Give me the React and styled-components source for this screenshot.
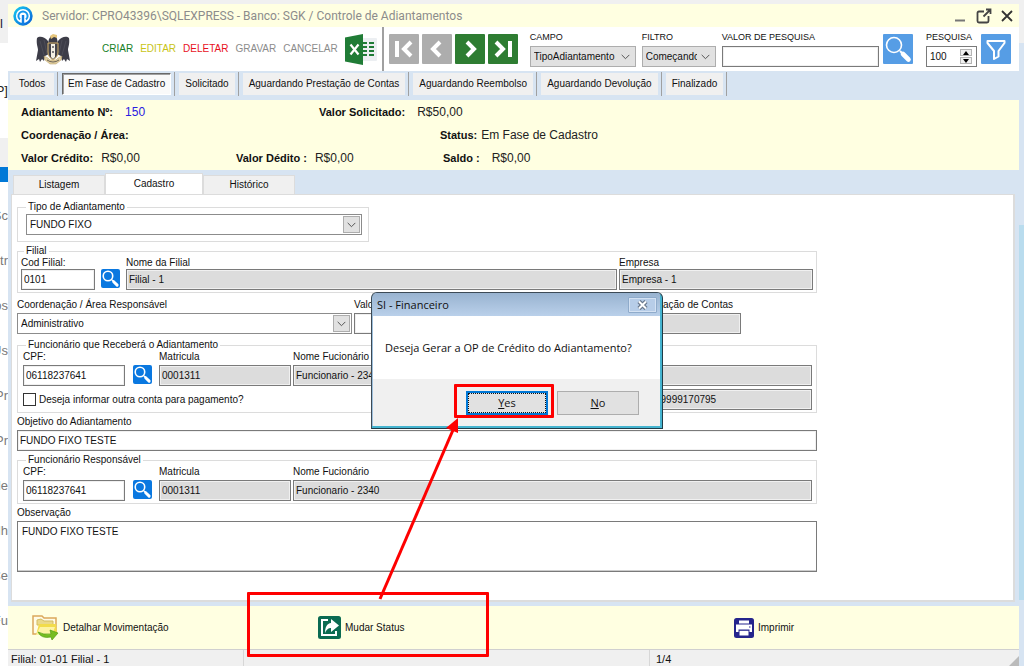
import React from "react";
import styled, { createGlobalStyle } from "styled-components";

const GlobalStyle = createGlobalStyle`
  * {
    box-sizing: border-box;
  }
  body {
    margin: 0;
    background: #f0f0f0;
    color: #111;
    font-family: "Liberation Sans", Arial, sans-serif;
    font-size: 10px;
    line-height: 12px;
  }
  button, input, select, textarea {
    margin: 0;
    color: inherit;
    font: inherit;
  }
`;

const Desktop = styled.div`
  position: relative;
  display: grid;
  grid-template-columns: 8px minmax(0, 1fr) 5px;
  min-height: 100vh;
  padding-top: 4px;
  overflow: hidden;
`;

/* slices of the page that lies behind the window */
const LeftStrip = styled.div`
  display: flex;
  flex-direction: column;
  overflow: hidden;
  background: #fff;
  color: #7a7a7a;
  font-size: 13px;
`;

const Slice = styled.div`
  display: flex;
  flex: none;
  align-items: center;
  justify-content: ${(p) => (p.$left ? "flex-start" : "flex-end")};
  height: ${(p) => p.$height}px;
  background: ${(p) => p.$bg || "#fff"};
  color: ${(p) => p.$color || "inherit"};
`;

const RightStrip = styled.div`
  display: grid;
  grid-template-rows: 39px 182px 375px 1fr;
`;

const RightSlice = styled.div`
  background: ${(p) => p.$bg};
`;

const Window = styled.div`
  display: flex;
  flex-direction: column;
  background: #d7e4f2;
`;

const TitleBar = styled.header`
  display: flex;
  align-items: center;
  height: 23px;
  padding: 0 5px;
  background: #ffffe1;
  color: #8c8c8c;
`;

const Title = styled.h1`
  flex: 1;
  margin: 0 0 0 9px;
  font-family: Roboto, "Liberation Sans", sans-serif;
  font-size: 12px;
  font-weight: 400;
`;

const WindowButtons = styled.div`
  display: flex;
  gap: 8px;
`;

const BareButton = styled.button`
  display: flex;
  align-items: center;
  gap: 4px;
  padding: 0;
  border: 0;
  background: none;
  color: ${(p) => p.$color || "inherit"};
`;

const Toolbar = styled.div`
  display: flex;
  align-items: center;
  height: 44px;
  padding-right: 8px;
  background: #fff;
`;

const Brand = styled.div`
  display: flex;
  padding: 0 31px 0 27px;
`;

const Actions = styled.div`
  display: flex;
  align-items: center;
  gap: 7px;
  padding-right: 4px;
`;

const Navigation = styled.div`
  display: flex;
  align-items: center;
  align-self: stretch;
  gap: 3px;
  padding: 0 12px 0 5px;
  border-left: 2px solid #a0a0a0;
`;

const SquareButton = styled.button`
  display: flex;
  flex: none;
  align-items: center;
  justify-content: center;
  width: 30px;
  height: 30px;
  padding: 0;
  border: 0;
  border-radius: 1px;
  background: ${(p) => p.$bg};
`;

const Search = styled.div`
  display: flex;
  flex: 1;
  align-items: center;
  gap: 4px;
`;

const SearchField = styled.div`
  display: flex;
  flex: ${(p) => (p.$width ? "none" : 1)};
  flex-direction: column;
  gap: 3px;
  width: ${(p) => (p.$width ? p.$width + "px" : "auto")};
  min-width: 0;
  margin-right: ${(p) => (p.$width ? 2 : 0)}px;
  font-size: 9px;
`;

const PageSize = styled(SearchField)`
  margin: 0 0 0 9px;
`;

const Spinner = styled.div`
  display: flex;
  align-items: center;
  height: 21px;
  padding: 2px 4px 2px 0;
  border: 1px solid #7a7a7a;
  background: #fff;
  font-size: 10px;
`;

const SpinnerInput = styled.input`
  flex: 1;
  min-width: 0;
  padding: 0 0 0 3px;
  border: 0;
  background: none;
`;

const SpinnerButtons = styled.div`
  display: grid;
  gap: 1px;
`;

const SpinnerButton = styled.button`
  display: flex;
  align-items: center;
  justify-content: center;
  width: 12px;
  height: 7px;
  padding: 0;
  border: 1px solid #b4b4b4;
  background: #f0f0f0;
`;

const SelectBox = styled.div`
  display: grid;
  height: 21px;
  border: 1px solid ${(p) => (p.$flat ? "#adadad" : "#8c8c8c")};
  background: ${(p) => (p.$flat ? "#e1e1e1" : "#fff")};
  font-size: 10px;
`;

const NativeSelect = styled.select`
  grid-area: 1 / 1;
  width: 100%;
  min-width: 0;
  padding: 0 16px 0 3px;
  border: 0;
  background: none;
  appearance: none;
`;

const SelectArrow = styled.span`
  display: flex;
  grid-area: 1 / 1;
  align-items: center;
  justify-content: center;
  justify-self: end;
  width: 17px;
  margin: 1px;
  border: ${(p) => (p.$flat ? "0" : "1px solid #adadad")};
  background: #e1e1e1;
  pointer-events: none;
`;

const StatusTabs = styled.nav`
  display: flex;
  align-items: center;
  height: 29px;
  padding: 0 2px 3px;
`;

const StatusTab = styled.div`
  display: flex;
  align-items: center;
  height: 24px;
  margin-right: 4px;
  padding-right: 3px;
  border-right: 1px solid #a0a0a0;
`;

const StatusButton = styled.button`
  min-width: 44px;
  height: 22px;
  padding: 0 5px;
  border: 1px solid;
  border-color: ${(p) =>
    p.$active ? "#696969 #fff #fff #696969" : "#f0f0f0"};
  box-shadow: ${(p) => (p.$active ? "inset 1px 1px #a0a0a0" : "none")};
  background: ${(p) => (p.$active ? "#f9f9f9" : "#f0f0f0")};
  white-space: nowrap;
`;

const Summary = styled.section`
  display: grid;
  grid-template-rows: 24px 22px 24px;
  padding: 0 13px;
  background: #ffffe1;
`;

const SummaryRow = styled.dl`
  display: grid;
  grid-template-columns: ${(p) => p.$columns};
  align-items: center;
  margin: 0;
`;

const SummaryItem = styled.div`
  display: flex;
  align-items: center;
  gap: ${(p) => p.$gap || 8}px;
`;

const Term = styled.dt`
  font-size: 11px;
  font-weight: 700;
`;

const Value = styled.dd`
  margin: 0;
  color: ${(p) => p.$color || "#222"};
  font-size: 12px;
`;

const Tabs = styled.div`
  display: flex;
  align-items: flex-end;
  height: 24px;
  padding-left: 5px;
`;

const Tab = styled.button`
  width: ${(p) => (p.$active ? 98 : 92)}px;
  height: ${(p) => (p.$active ? 21 : 19)}px;
  padding: 0;
  border: 1px solid #dcdcdc;
  border-bottom: 0;
  background: ${(p) => (p.$active ? "#fff" : "#f0f0f0")};
`;

const Panel = styled.main`
  flex: 1;
  margin: 0 4px 4px 3px;
  padding: 6px 6px 24px 5px;
  border: 1px solid #dcdcdc;
  border-right-width: 2px;
  border-bottom-width: 2px;
  background: #fff;
`;

const Form = styled.form`
  display: grid;
  gap: 3px;
  width: 100%;
  max-width: 800px;
`;

const Group = styled.fieldset`
  width: ${(p) => p.$width || "100%"};
  min-width: 0;
  margin: 0;
  padding: ${(p) => p.$padding || "0 4px 2px"};
  border: 1px solid #dcdcdc;
`;

const Legend = styled.legend`
  margin-left: ${(p) => (p.$wide ? 0 : 3)}px;
  padding: 0 2px;
`;

const Line = styled.div`
  display: grid;
  grid-template-columns: ${(p) => p.$columns};
  align-items: end;
  gap: 2px;
  padding: ${(p) => p.$padding || 0};
`;

const Field = styled.div`
  display: grid;
  gap: ${(p) => (p.$tight ? 0 : 2)}px;
  min-width: 0;
`;

const Label = styled.label`
  padding-right: 8px;
  text-align: ${(p) => (p.$right ? "right" : "left")};
  white-space: nowrap;
`;

const TextInput = styled.input`
  width: 100%;
  height: 21px;
  padding: 0 3px 1px 2px;
  border: 1px solid #7a7a7a;
  border-radius: 0;
  box-shadow: inset 0 0 0 1px #f0f0f0;
  background: ${(p) => (p.readOnly ? "#dcdcdc" : "#fff")};
`;

const TextArea = styled.textarea`
  display: block;
  width: 100%;
  height: 51px;
  padding: 4px;
  border: 1px solid #7a7a7a;
  box-shadow: inset 0 -1px #ccc;
  resize: none;
`;

const LookupButton = styled.button`
  display: flex;
  align-items: center;
  justify-content: center;
  justify-self: center;
  width: 19px;
  height: 19px;
  margin-bottom: 2px;
  padding: 0;
  border: 0;
  border-radius: 2px;
  background: #0a78e0;
`;

const CheckLine = styled.div`
  display: grid;
  grid-template-columns: minmax(0, 1fr) 160px;
  align-items: center;
  padding-top: 3px;
`;

const Check = styled.label`
  display: flex;
  align-items: center;
  gap: 3px;
`;

const Checkbox = styled.input`
  width: 13px;
  height: 13px;
  border: 1px solid #333;
  background: #fff;
  appearance: none;
`;

const Footer = styled.footer`
  display: grid;
  grid-template-columns: 286px 416px 1fr;
  align-items: center;
  height: 43px;
  padding-left: 24px;
  background: #ffffe1;
`;

const StatusBar = styled.div`
  display: grid;
  grid-template-columns: 236px 406px 1fr auto;
  height: 17px;
  border-top: 1px solid #d0d0d0;
  background: #f0f0f0;
`;

const StatusCell = styled.div`
  padding: 3px 0 0 ${(p) => (p.$first ? 3 : 6)}px;
  border-right: ${(p) => (p.$last ? "0" : "1px solid #d7d7d7")};
  font-size: 11px;
`;

const Dialog = styled.section`
  position: absolute;
  top: 292px;
  left: 371px;
  width: 292px;
  border: 1px solid #3c4a56;
  border-right-color: #1f3c48;
  border-bottom-color: #1f3c48;
  border-radius: 6px 6px 0 0;
  box-shadow: inset -2px -2px #45b4d0;
  background: #9fc0dc;
  padding: 0 2px 2px 1px;
  overflow: hidden;
  font-family: "Open Sans", "Noto Sans", sans-serif;
  font-size: 11px;
`;

const DialogTitle = styled.header`
  display: flex;
  align-items: center;
  justify-content: space-between;
  height: 23px;
  padding: 0 3px 0 4px;
  background: linear-gradient(#98b3d0, #bad0ea);
`;

const DialogHeading = styled.h2`
  margin: 0;
  font-size: 11px;
  font-weight: 400;
`;

const DialogClose = styled.button`
  display: flex;
  align-items: center;
  justify-content: center;
  width: 29px;
  height: 16px;
  padding: 0;
  border: 1px solid #8fabcb;
  border-radius: 1px;
  box-shadow: inset 0 0 0 1px #d4e2f3;
  background: #b7cde8;
`;

const DialogBody = styled.p`
  margin: 0;
  padding: 26px 12px 25px;
  background: #fff;
  white-space: nowrap;
`;

const DialogFooter = styled.footer`
  display: flex;
  justify-content: flex-end;
  gap: 9px;
  padding: 12px 21px 11px;
  background: #f0f0f0;
`;

const DialogButton = styled.button`
  width: 82px;
  height: 24px;
  padding: 0;
  border: ${(p) => (p.$primary ? "2px solid #0078d7" : "1px solid #adadad")};
  outline: ${(p) => (p.$primary ? "1px dotted #111" : "none")};
  outline-offset: -3px;
  background: #e1e1e1;
`;

/* red marks drawn over the window */
const Highlight = styled.div`
  position: absolute;
  top: ${(p) => p.$top}px;
  left: ${(p) => p.$left}px;
  width: ${(p) => p.$width}px;
  height: ${(p) => p.$height}px;
  border: 3px solid #fe0000;
  border-radius: 1px;
  pointer-events: none;
`;

const Arrow = styled.svg`
  position: absolute;
  top: 416px;
  left: 370px;
  pointer-events: none;
`;

const AppLogo = () => (
  <svg width="20" height="20" viewBox="0 0 20 20" aria-hidden="true">
    <defs>
      <linearGradient id="ring" x1="0" y1="0" x2="1" y2="1">
        <stop offset="0" stopColor="#16c8f0" />
        <stop offset="1" stopColor="#0a62d8" />
      </linearGradient>
    </defs>
    <circle
      cx="10"
      cy="10"
      r="8.400"
      fill="#fff"
      stroke="url(#ring)"
      strokeWidth="2.600"
    />
    <path
      d="M7 13.500A4.600 4.600 0 1 1 13 13.500"
      fill="none"
      stroke="#1496ec"
      strokeWidth="2"
    />
    <path d="M8.800 9h2.400v10H8.800z" fill="#1280e4" />
  </svg>
);

const Eagle = () => (
  <svg width="36" height="31" viewBox="0 0 36 31" aria-hidden="true">
    <path
      d="M13 7C9 2 4 2 2 4c-1 6 1 9 1 12L1 27l3-2 1 3 2-3 2 2 1-5 4-2z"
      fill="#3d3d48"
    />
    <path
      d="M23 7c4-5 9-5 11-3 1 6-1 9-1 12l2 11-3-2-1 3-2-3-2 2-1-5-4-2z"
      fill="#3d3d48"
    />
    <path
      d="M5 7l4 14M9 6l3 14M31 7l-4 14M27 6l-3 14"
      stroke="#5c5c66"
      strokeWidth=".5"
    />
    <path d="M14 5l2-3 5-1 1 4 1 4-2 4h-6l-2-4z" fill="#3d3d48" />
    <path d="M15 2l3-2 4 1v3l-3-1-3 2z" fill="#e6c67c" />
    <path
      d="M13 9h10v9c0 4-2 6-5 8-3-2-5-4-5-8z"
      fill="#44444d"
      stroke="#d8b46a"
    />
    <path d="M16 10h4v13l-2 2-2-2z" fill="#f4f0e4" />
    <path d="M18 12v2M18 17v2" stroke="#55555c" strokeWidth="1.500" />
    <path
      d="M9 22l4 2 2 2h6l2-2 4-2-1 4-5 4h-6l-5-4z"
      fill="#e2cfa0"
      stroke="#b49a62"
      strokeWidth=".5"
    />
    <path d="M12 26q6 4 12 0" fill="none" stroke="#6b6356" />
  </svg>
);

const ExcelIcon = () => (
  <svg width="33" height="31" viewBox="0 0 33 31" aria-hidden="true">
    <path d="M18 4h13q1 0 1 1v21q0 1-1 1H18z" fill="#eceff2" />
    <path d="M0 3.500L18 0v31L0 27.500z" fill="#207c36" />
    <path
      d="M5.500 10.500l8 10M13.500 10.500l-8 10"
      stroke="#fff"
      strokeWidth="2.200"
    />
    <path
      d="M18 9h4M18 13h4M18 17h4M18 21h4M24 9h5M24 13h5M24 17h5M24 21h5"
      stroke="#207c36"
      strokeWidth="2.200"
    />
  </svg>
);

const navPaths = {
  first: "M8 7v16M22 8l-7 7 7 7",
  previous: "M18 8l-7 7 7 7",
  next: "M12 8l7 7-7 7",
  last: "M8 8l7 7-7 7M22 7v16",
};

const NavIcon = ({ name }) => (
  <svg width="30" height="30" viewBox="0 0 30 30" aria-hidden="true">
    <path d={navPaths[name]} fill="none" stroke="#fff" strokeWidth="4" />
  </svg>
);

const SearchIcon = ({ size, width }) => (
  <svg width={size} height={size} viewBox="0 0 30 30" aria-hidden="true">
    <circle
      cx="11"
      cy="11"
      r="7.500"
      fill="none"
      stroke="#fff"
      strokeWidth={width}
    />
    <path d="M17 17l3 3" stroke="#fff" strokeWidth="2" />
    <path
      d="M20 20l5.500 5.500"
      stroke="#fff"
      strokeWidth="4.600"
      strokeLinecap="round"
    />
  </svg>
);

const FunnelIcon = () => (
  <svg width="30" height="30" viewBox="0 0 30 30" aria-hidden="true">
    <path
      d="M6.500 7h17v2L17.500 17v5.500L13 25v-8L6.500 9z"
      fill="none"
      stroke="#fff"
      strokeWidth="2"
      strokeLinejoin="round"
    />
  </svg>
);

const Chevron = () => (
  <svg width="9" height="6" viewBox="0 0 9 6" aria-hidden="true">
    <path d="M.7.900l3.800 3.800L8.300.900" fill="none" stroke="#555" />
  </svg>
);

const FolderIcon = () => (
  <svg width="27" height="26" viewBox="0 0 27 26" aria-hidden="true">
    <path
      d="M1 1h9l2 2h12v16H1z"
      fill="#fffbe6"
      stroke="#dba85c"
      strokeWidth="1.500"
    />
    <path d="M5 5l4-1 3 2h9v4H5z" fill="#ead98a" stroke="#d3bc62" />
    <path d="M7 9h17l1 11H4z" fill="#f2dc4b" />
    <path d="M4 20l4-8h15l-3 8z" fill="#fdf3a4" />
    <path
      d="M6 17q5 3 13 2l-1-4 8 3-6 7-1-3Q9 24 6 17z"
      fill="#76bd22"
      stroke="#519e14"
      strokeWidth=".7"
    />
  </svg>
);

const ShareIcon = () => (
  <svg width="23" height="23" viewBox="0 0 23 23" aria-hidden="true">
    <rect width="23" height="23" rx="2.500" fill="#0b6b52" />
    <path d="M10 4H4v15h14v-4" fill="none" stroke="#fff" strokeWidth="2" />
    <path
      d="M13 3l8 6.500-8 6.500v-4c-3 0-5 2-6 5 0-6 2-9.500 6-10z"
      fill="#fff"
    />
  </svg>
);

const PrinterIcon = () => (
  <svg width="20" height="20" viewBox="0 0 20 20" aria-hidden="true">
    <rect width="20" height="20" rx="2.500" fill="#25258c" />
    <path d="M5 2.500h10v3H5zM2 6.500h16V14h-2.500v-2.500h-11V14H2z" fill="#fff" />
    <path d="M5.500 12.800h9V17.500h-9z" fill="#fff" />
    <path d="M15 9h1.500" stroke="#25258c" />
  </svg>
);

const SelectField = ({ id, value, flat }) => (
  <SelectBox $flat={flat}>
    <NativeSelect id={id} defaultValue={value}>
      <option>{value}</option>
    </NativeSelect>
    <SelectArrow $flat={flat}>
      <Chevron />
    </SelectArrow>
  </SelectBox>
);

const Input = ({ id, label, value, locked, tight, right }) => (
  <Field $tight={tight}>
    <Label htmlFor={id} $right={right}>
      {label}
    </Label>
    <TextInput id={id} defaultValue={value} readOnly={locked} />
  </Field>
);

const Lookup = () => (
  <LookupButton type="button" aria-label="Procurar">
    <SearchIcon size={19} width={2.5} />
  </LookupButton>
);

const Employee = ({ prefix, name }) => (
  <Line $columns="102px 30px 132px minmax(0, 1fr)">
    <Input id={`${prefix}-cpf`} label="CPF:" value="06118237641" />
    <Lookup />
    <Input
      id={`${prefix}-matricula`}
      label="Matricula"
      value="0001311"
      locked
    />
    <Input id={`${prefix}-nome`} label="Nome Fucionário" value={name} locked />
  </Line>
);

const slices = ["Sc", "ntr", "os", "Us", "Pr", "Pr", "de", "olh", "Ce", "Fu"];

const actions = [
  ["CRIAR", "#168026"],
  ["EDITAR", "#c8c416"],
  ["DELETAR", "#e8101c"],
  ["GRAVAR", "#8c8c8c"],
  ["CANCELAR", "#8c8c8c"],
];

const statusTabs = [
  "Todos",
  "Em Fase de Cadastro",
  "Solicitado",
  "Aguardando Prestação de Contas",
  "Aguardando Reembolso",
  "Aguardando Devolução",
  "Finalizado",
];

const App = () => {
  return (
    <Desktop>
      <GlobalStyle />
      <LeftStrip aria-hidden="true">
        <Slice $left $height={39} $bg="#f0f0f0" $color="#223">
          l
        </Slice>
        <Slice $height={95} $color="#222">
          P]
        </Slice>
        <Slice $height={29} $bg="#f0f0f0" />
        <Slice $height={15} $bg="#0078d7" />
        <Slice $height={11} />
        {slices.map((text, i) => (
          <Slice key={i} $height={45}>
            {text}
          </Slice>
        ))}
      </LeftStrip>

      <Window>
        <TitleBar>
          <AppLogo />
          <Title>
            Servidor: CPRO43396\SQLEXPRESS - Banco: SGK / Controle de
            Adiantamentos
          </Title>
          <WindowButtons>
            <BareButton aria-label="Minimizar">
              <svg width="14" height="16" viewBox="0 0 14 16">
                <path d="M1 12.500h10" stroke="#777" strokeWidth="2" />
              </svg>
            </BareButton>
            <BareButton aria-label="Restaurar">
              <svg width="16" height="16" viewBox="0 0 16 16">
                <path
                  d="M8 3.500H3q-1.500 0-1.500 1.500v8q0 1.500 1.500 1.500h8q1.500 0 1.500-1.500V8M10 1.500h4.500V6M14.500 1.500L7.500 8.500"
                  fill="none"
                  stroke="#444"
                  strokeWidth="1.800"
                />
              </svg>
            </BareButton>
            <BareButton aria-label="Fechar">
              <svg width="14" height="16" viewBox="0 0 14 16">
                <path
                  d="M2 3l10 10M12 3L2 13"
                  stroke="#333"
                  strokeWidth="1.800"
                />
              </svg>
            </BareButton>
          </WindowButtons>
        </TitleBar>

        <Toolbar>
          <Brand>
            <Eagle />
          </Brand>
          <Actions>
            {actions.map(([name, color]) => (
              <BareButton key={name} $color={color}>
                {name}
              </BareButton>
            ))}
            <BareButton aria-label="Excel">
              <ExcelIcon />
            </BareButton>
          </Actions>
          <Navigation>
            <SquareButton $bg="#adadad" aria-label="Primeiro">
              <NavIcon name="first" />
            </SquareButton>
            <SquareButton $bg="#adadad" aria-label="Anterior">
              <NavIcon name="previous" />
            </SquareButton>
            <SquareButton $bg="#2e7d32" aria-label="Próximo">
              <NavIcon name="next" />
            </SquareButton>
            <SquareButton $bg="#2e7d32" aria-label="Último">
              <NavIcon name="last" />
            </SquareButton>
          </Navigation>
          <Search>
            <SearchField $width={106}>
              <Label htmlFor="campo">CAMPO</Label>
              <SelectField id="campo" value="TipoAdiantamento" flat />
            </SearchField>
            <SearchField $width={74}>
              <Label htmlFor="filtro">FILTRO</Label>
              <SelectField id="filtro" value="Começando" flat />
            </SearchField>
            <SearchField>
              <Label htmlFor="valor-pesquisa">VALOR DE PESQUISA</Label>
              <TextInput id="valor-pesquisa" />
            </SearchField>
            <SquareButton $bg="#569de5" aria-label="Pesquisar">
              <SearchIcon size={30} width={1.6} />
            </SquareButton>
            <PageSize $width={51}>
              <Label htmlFor="pesquisa">PESQUISA</Label>
              <Spinner>
                <SpinnerInput id="pesquisa" defaultValue="100" />
                <SpinnerButtons>
                  <SpinnerButton aria-label="Mais">
                    <svg width="6" height="4" viewBox="0 0 6 4">
                      <path d="M0 4l3-4 3 4z" />
                    </svg>
                  </SpinnerButton>
                  <SpinnerButton aria-label="Menos">
                    <svg width="6" height="4" viewBox="0 0 6 4">
                      <path d="M0 0l3 4 3-4z" />
                    </svg>
                  </SpinnerButton>
                </SpinnerButtons>
              </Spinner>
            </PageSize>
            <SquareButton $bg="#569de5" aria-label="Filtrar">
              <FunnelIcon />
            </SquareButton>
          </Search>
        </Toolbar>

        <StatusTabs>
          {statusTabs.map((name, i) => (
            <StatusTab key={name}>
              <StatusButton $active={i === 1}>{name}</StatusButton>
            </StatusTab>
          ))}
        </StatusTabs>

        <Summary>
          <SummaryRow $columns="298px 1fr">
            <SummaryItem $gap={12}>
              <Term>Adiantamento Nº:</Term>
              <Value $color="#2a20e0">150</Value>
            </SummaryItem>
            <SummaryItem $gap={12}>
              <Term>Valor Solicitado:</Term>
              <Value>R$50,00</Value>
            </SummaryItem>
          </SummaryRow>
          <SummaryRow $columns="419px 1fr">
            <SummaryItem>
              <Term>Coordenação / Área:</Term>
            </SummaryItem>
            <SummaryItem $gap={4}>
              <Term>Status:</Term>
              <Value>Em Fase de Cadastro</Value>
            </SummaryItem>
          </SummaryRow>
          <SummaryRow $columns="215px 207px 1fr">
            <SummaryItem>
              <Term>Valor Crédito:</Term>
              <Value>R$0,00</Value>
            </SummaryItem>
            <SummaryItem>
              <Term>Valor Dédito :</Term>
              <Value>R$0,00</Value>
            </SummaryItem>
            <SummaryItem $gap={12}>
              <Term>Saldo :</Term>
              <Value>R$0,00</Value>
            </SummaryItem>
          </SummaryRow>
        </Summary>

        <Tabs>
          <Tab>Listagem</Tab>
          <Tab $active>Cadastro</Tab>
          <Tab>Histórico</Tab>
        </Tabs>
        <Panel>
          <Form>
            <Group $width="352px" $padding="1px 6px 6px 8px">
              <Legend $wide>Tipo de Adiantamento</Legend>
              <SelectField id="tipo" value="FUNDO FIXO" />
            </Group>

            <Group $padding="0 3px 2px">
              <Legend>Filial</Legend>
              <Line $columns="74px 27px minmax(0, 1fr) 194px">
                <Input tight id="cod" label="Cod Filial:" value="0101" />
                <Lookup />
                <Input
                  tight
                  id="filial"
                  label="Nome da Filial"
                  value="Filial - 1"
                  locked
                />
                <Input
                  tight
                  id="empresa"
                  label="Empresa"
                  value="Empresa - 1"
                  locked
                />
              </Line>
            </Group>

            <Line $columns="335px 200px 185px" $padding="3px 0 2px">
              <Field>
                <Label htmlFor="area">Coordenação / Área Responsável</Label>
                <SelectField id="area" value="Administrativo" />
              </Field>
              <Input id="valor" label="Valor" />
              <Input id="prestacao" label="Prestação de Contas" locked right />
            </Line>

            <Group $padding="0 4px 2px 5px">
              <Legend>Funcionário que Receberá o Adiantamento</Legend>
              <Employee prefix="recebedor" name="Funcionario - 2340" />
              <CheckLine>
                <Check>
                  <Checkbox type="checkbox" />
                  Deseja informar outra conta para pagamento?
                </Check>
                <TextInput
                  aria-label="Conta"
                  defaultValue="99999170795"
                  readOnly
                />
              </CheckLine>
            </Group>

            <Input
              id="objetivo"
              label="Objetivo do Adiantamento"
              value="FUNDO FIXO TESTE"
            />

            <Group $padding="0 4px 2px 5px">
              <Legend>Funcionário Responsável</Legend>
              <Employee prefix="responsavel" name="Funcionario - 2340" />
            </Group>

            <Field>
              <Label htmlFor="obs">Observação</Label>
              <TextArea id="obs" defaultValue="FUNDO FIXO TESTE" />
            </Field>
          </Form>
        </Panel>

        <Footer>
          <BareButton>
            <FolderIcon />
            Detalhar Movimentação
          </BareButton>
          <BareButton>
            <ShareIcon />
            Mudar Status
          </BareButton>
          <BareButton>
            <PrinterIcon />
            Imprimir
          </BareButton>
        </Footer>
        <StatusBar>
          <StatusCell $first>Filial: 01-01 Filial - 1</StatusCell>
          <StatusCell />
          <StatusCell $last>1/4</StatusCell>
          <svg width="10" height="16" viewBox="0 0 10 16" aria-hidden="true">
            <path d="M10 6v10H0z" fill="#bbb" />
          </svg>
        </StatusBar>
      </Window>

      <RightStrip aria-hidden="true">
        <RightSlice $bg="#f0f0f0" />
        <RightSlice $bg="#d7e4f2" />
        <RightSlice $bg="#b9dcee" />
        <RightSlice $bg="#d7e4f2" />
      </RightStrip>

      <Dialog role="dialog" aria-labelledby="dialog-title">
        <DialogTitle>
          <DialogHeading id="dialog-title">SI - Financeiro</DialogHeading>
          <DialogClose aria-label="Fechar">
            <svg width="13" height="10" viewBox="0 0 13 10">
              <path
                d="M3 1.500l7 7M10 1.500l-7 7"
                stroke="#66758a"
                strokeWidth="4.400"
              />
              <path
                d="M3 1.500l7 7M10 1.500l-7 7"
                stroke="#fff"
                strokeWidth="2"
              />
            </svg>
          </DialogClose>
        </DialogTitle>
        <DialogBody>Deseja Gerar a OP de Crédito do Adiantamento?</DialogBody>
        <DialogFooter>
          <DialogButton $primary>
            <u>Y</u>es
          </DialogButton>
          <DialogButton>
            <u>N</u>o
          </DialogButton>
        </DialogFooter>
      </Dialog>

      <Highlight $top={384} $left={454} $width={100} $height={34} />
      <Highlight $top={592} $left={247} $width={242} $height={65} />
      <Arrow width="96" height="188" viewBox="0 0 96 188" aria-hidden="true">
        <path d="M10 183L83 14" stroke="#fe0000" strokeWidth="3" />
        <path d="M88 2v15l-12-5z" fill="#fe0000" />
      </Arrow>
    </Desktop>
  );
};

export default App;
